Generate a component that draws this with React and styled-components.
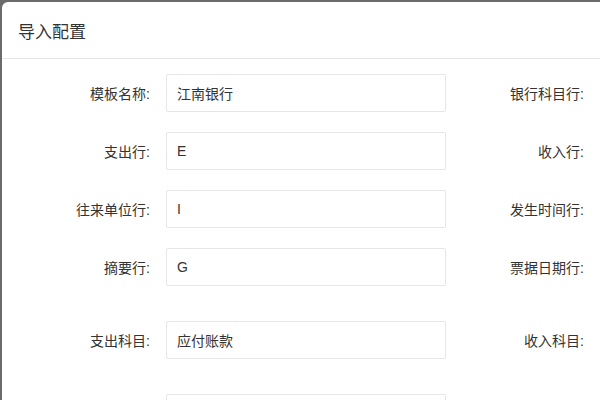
import styled, { createGlobalStyle } from 'styled-components';

const GlobalStyle = createGlobalStyle`
  html, body {
    margin: 0;
    padding: 0;
    background: #6b6b6b;
    overflow: hidden;
  }
  body {
    font-family: "Liberation Sans", "Noto Sans CJK SC", sans-serif;
    color: #333;
  }
`;

const Overlay = styled.div`
  width: 600px;
  height: 400px;
  padding: 2px 0 0 2px;
  box-sizing: border-box;
  overflow: hidden;
`;

const Modal = styled.div`
  width: 1000px;
  min-height: 500px;
  background: #fff;
  border-radius: 6px;
`;

const Header = styled.div`
  height: 56px;
  display: flex;
  align-items: center;
  padding: 0 16px;
  border-bottom: 1px solid #e5e5e5;
  font-size: 17px;
  color: #333;
`;

const Body = styled.div`
  padding: 15px 0 0 12px;
`;

const Row = styled.div`
  display: flex;
  align-items: center;
  margin-bottom: ${(p) => (p.$wide ? 35 : 20)}px;
`;

const Field = styled.div`
  display: flex;
  align-items: center;
`;

const Label = styled.label`
  width: ${(p) => (p.$second ? 138 : 136)}px;
  padding-right: ${(p) => (p.$second ? 18 : 16)}px;
  text-align: right;
  font-size: 14px;
  color: #333;
  white-space: nowrap;
`;

const Input = styled.div`
  width: 280px;
  height: 38px;
  box-sizing: border-box;
  border: 1px solid #e6e6e6;
  border-radius: 2px;
  padding: 0 10px;
  display: flex;
  align-items: center;
  font-size: 14px;
  color: #333;
`;

const rows = [
  [['模板名称', '江南银行'], ['银行科目行', '']],
  [['支出行', 'E'], ['收入行', '']],
  [['往来单位行', 'I'], ['发生时间行', '']],
  [['摘要行', 'G'], ['票据日期行', '']],
  [['支出科目', '应付账款'], ['收入科目', '']],
  [['', ''], ['', '']],
];

const App = () => {
  return (
    <Overlay>
      <GlobalStyle />
      <Modal>
        <Header>导入配置</Header>
        <Body>
          {rows.map((row, i) => (
            <Row key={i} $wide={i >= 3}>
              {row.map(([label, value], j) => (
                <Field key={j}>
                  <Label $second={j === 1}>{label ? `${label}:` : ''}</Label>
                  <Input>{value}</Input>
                </Field>
              ))}
            </Row>
          ))}
        </Body>
      </Modal>
    </Overlay>
  );
};

export default App;
